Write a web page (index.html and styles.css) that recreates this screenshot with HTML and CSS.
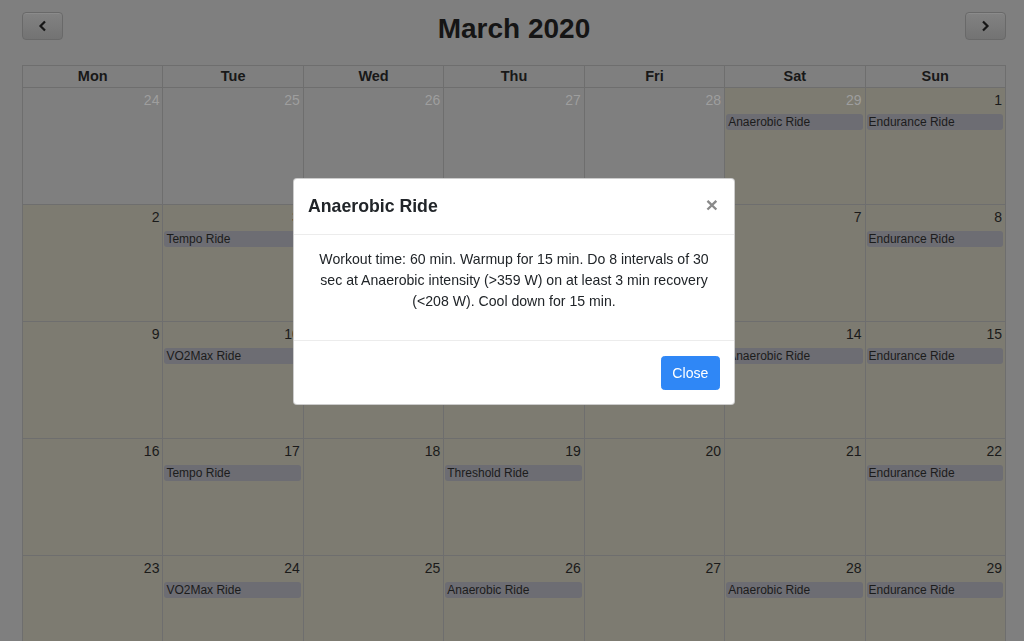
FILE: index.html
```html
<!DOCTYPE html>
<html lang="en">
<head>
<meta charset="utf-8">
<title>March 2020</title>
<link rel="stylesheet" href="styles.css">
</head>
<body>
<div class="page">
  <div class="toolbar">
    <button class="nav-btn" aria-label="prev">
      <svg width="10" height="12" viewBox="0 0 10 12"><path d="M7 1.5 L2.5 6 L7 10.5" fill="none" stroke="#161616" stroke-width="2.2"/></svg>
    </button>
    <h2 class="title">March 2020</h2>
    <button class="nav-btn" aria-label="next">
      <svg width="10" height="12" viewBox="0 0 10 12"><path d="M3 1.5 L7.5 6 L3 10.5" fill="none" stroke="#161616" stroke-width="2.2"/></svg>
    </button>
  </div>

  <div class="cal">
    <div class="cal-head">
      <div class="hd">Mon</div><div class="hd">Tue</div><div class="hd">Wed</div><div class="hd">Thu</div><div class="hd">Fri</div><div class="hd">Sat</div><div class="hd">Sun</div>
    </div>

    <div class="week">
      <div class="day other"><div class="num">24</div></div>
      <div class="day other"><div class="num">25</div></div>
      <div class="day other"><div class="num">26</div></div>
      <div class="day other"><div class="num">27</div></div>
      <div class="day other"><div class="num">28</div></div>
      <div class="day other hl"><div class="num">29</div><div class="ev">Anaerobic Ride</div></div>
      <div class="day hl"><div class="num">1</div><div class="ev">Endurance Ride</div></div>
    </div>

    <div class="week">
      <div class="day hl"><div class="num">2</div></div>
      <div class="day hl"><div class="num">3</div><div class="ev">Tempo Ride</div></div>
      <div class="day hl"><div class="num">4</div></div>
      <div class="day hl"><div class="num">5</div></div>
      <div class="day hl"><div class="num">6</div></div>
      <div class="day hl"><div class="num">7</div></div>
      <div class="day hl"><div class="num">8</div><div class="ev">Endurance Ride</div></div>
    </div>

    <div class="week">
      <div class="day hl"><div class="num">9</div></div>
      <div class="day hl"><div class="num">10</div><div class="ev">VO2Max Ride</div></div>
      <div class="day hl"><div class="num">11</div></div>
      <div class="day hl"><div class="num">12</div></div>
      <div class="day hl"><div class="num">13</div></div>
      <div class="day hl"><div class="num">14</div><div class="ev">Anaerobic Ride</div></div>
      <div class="day hl"><div class="num">15</div><div class="ev">Endurance Ride</div></div>
    </div>

    <div class="week">
      <div class="day hl"><div class="num">16</div></div>
      <div class="day hl"><div class="num">17</div><div class="ev">Tempo Ride</div></div>
      <div class="day hl"><div class="num">18</div></div>
      <div class="day hl"><div class="num">19</div><div class="ev">Threshold Ride</div></div>
      <div class="day hl"><div class="num">20</div></div>
      <div class="day hl"><div class="num">21</div></div>
      <div class="day hl"><div class="num">22</div><div class="ev">Endurance Ride</div></div>
    </div>

    <div class="week">
      <div class="day hl"><div class="num">23</div></div>
      <div class="day hl"><div class="num">24</div><div class="ev">VO2Max Ride</div></div>
      <div class="day hl"><div class="num">25</div></div>
      <div class="day hl"><div class="num">26</div><div class="ev">Anaerobic Ride</div></div>
      <div class="day hl"><div class="num">27</div></div>
      <div class="day hl"><div class="num">28</div><div class="ev">Anaerobic Ride</div></div>
      <div class="day hl"><div class="num">29</div><div class="ev">Endurance Ride</div></div>
    </div>
  </div>
</div>

<div class="backdrop">
  <div class="modal">
    <div class="modal-header">
      <h5 class="modal-title">Anaerobic Ride</h5>
      <button class="close" aria-label="Close">&times;</button>
    </div>
    <div class="modal-body">
      <p>Workout time: 60 min. Warmup for 15 min. Do 8 intervals of 30 sec at Anaerobic intensity (&gt;359 W) on at least 3 min recovery (&lt;208 W). Cool down for 15 min.</p>
    </div>
    <div class="modal-footer">
      <button class="btn-primary">Close</button>
    </div>
  </div>
</div>
</body>
</html>
```

FILE: styles.css
```css
html, body {
  margin: 0;
  padding: 0;
  height: 100%;
  overflow: hidden;
  background: #7f7f7f;
  font-family: "Liberation Sans", Arial, Helvetica, sans-serif;
}

.page {
  padding: 12px 18px 0 22px;
}

.toolbar {
  display: flex;
  align-items: center;
  justify-content: space-between;
  height: 28px;
  margin-bottom: 25px;
}

.nav-btn {
  width: 41px;
  height: 28px;
  padding: 0;
  border: 1px solid #696969;
  border-radius: 4px;
  background: linear-gradient(#828282, #737373);
  box-shadow: inset 0 1px 0 rgba(255,255,255,0.08);
  display: flex;
  align-items: center;
  justify-content: center;
}

.title {
  margin: 0;
  padding-top: 5px;
  font-size: 28px;
  line-height: 28px;
  font-weight: bold;
  color: #151515;
}

.cal {
  border-left: 1px solid #6e6e6e;
  border-top: 1px solid #6e6e6e;
}

.cal-head,
.week {
  display: grid;
  grid-template-columns: repeat(7, 1fr);
}

.hd {
  height: 21px;
  line-height: 21px;
  text-align: center;
  font-size: 14.5px;
  font-weight: bold;
  color: #181818;
  border-right: 1px solid #6e6e6e;
  border-bottom: 1px solid #6e6e6e;
}

.day {
  height: 116px;
  border-right: 1px solid #6e6e6e;
  border-bottom: 1px solid #6e6e6e;
  background: #7f7f7f;
}

.day.hl {
  background: #7d7b71;
}

.num {
  padding: 3px 3px 0 0;
  line-height: 18px;
  font-size: 14px;
  text-align: right;
  color: #1a1a1a;
}

.day.other .num {
  color: #9e9e9e;
}

.ev {
  margin: 5px 2px 0 1px;
  height: 16px;
  line-height: 16px;
  padding-left: 2px;
  font-size: 12px;
  color: #1c1c1c;
  background: #6d6d73;
  border-radius: 3px;
  white-space: nowrap;
  overflow: hidden;
}

.backdrop {
  position: fixed;
  inset: 0;
}

.modal {
  position: absolute;
  top: 178px;
  left: 293px;
  width: 442px;
  box-sizing: border-box;
  background: #fff;
  border: 1px solid rgba(0,0,0,0.2);
  border-radius: 4px;
  color: #212529;
}

.modal-header {
  display: flex;
  align-items: flex-start;
  justify-content: space-between;
  padding: 14px;
  border-bottom: 1px solid #ececec;
}

.modal-title {
  margin: 0;
  font-size: 17.7px;
  line-height: 26.5px;
  font-weight: bold;
  color: #212529;
}

.close {
  margin: 0 2px 0 0;
  padding: 1px 0 0;
  border: 0;
  background: transparent;
  font-family: "Liberation Sans", Arial, sans-serif;
  font-size: 21px;
  font-weight: bold;
  line-height: 21px;
  color: #8a8a8a;
}

.modal-body {
  padding: 14px;
  text-align: center;
  font-size: 14.1px;
  line-height: 21.2px;
}

.modal-body p {
  margin: 0 0 14px;
}

.modal-footer {
  display: flex;
  justify-content: flex-end;
  padding: 15px 14px 14px;
  border-top: 1px solid #ececec;
}

.btn-primary {
  font-family: "Liberation Sans", Arial, sans-serif;
  font-size: 14.1px;
  line-height: 21.2px;
  padding: 5.5px 10.6px 5.5px;
  color: #fff;
  background: #2f87f6;
  border: 1px solid #2f87f6;
  border-radius: 3.5px;
}
```
